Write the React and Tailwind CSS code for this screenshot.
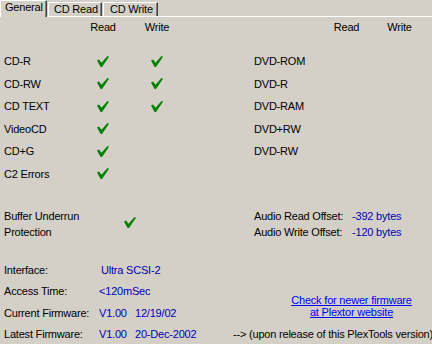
import React from 'react';

const Check = () => (
  <svg width="12" height="11" viewBox="0 0 12 11" className="block">
    <polygon points="0,4.5 2,3.5 4.5,6.8 10.5,0 12,0.8 5,11 3.6,11" fill="#008000" />
  </svg>
);

const cdRows = [
  { label: 'CD-R', read: true, write: true, dvd: 'DVD-ROM' },
  { label: 'CD-RW', read: true, write: true, dvd: 'DVD-R' },
  { label: 'CD TEXT', read: true, write: true, dvd: 'DVD-RAM' },
  { label: 'VideoCD', read: true, write: false, dvd: 'DVD+RW' },
  { label: 'CD+G', read: true, write: false, dvd: 'DVD-RW' },
  { label: 'C2 Errors', read: true, write: false, dvd: '' },
];

const App = () => {
  return (
    <div
      className="w-[432px] h-[344px] overflow-hidden bg-[#d4d0c8] text-black text-[11px] tracking-[-0.2px]"
      style={{ fontFamily: '"Liberation Sans", Arial, sans-serif' }}
    >
      {/* Tabs */}
      <div className="flex h-[16px] items-end">
        <div className="relative z-10 self-start h-[17px] w-[47px] bg-[#d4d0c8] border-l border-t border-white border-r border-r-[#404040] shadow-[inset_-1px_0_0_#808080] pl-[4px] leading-[12px]">
          General
        </div>
        <div className="ml-[1px] h-[14px] w-[54px] border-l border-t border-white border-r border-r-[#404040] shadow-[inset_-1px_0_0_#808080] pl-[5px] leading-[12px]">
          CD Read
        </div>
        <div className="ml-[1px] h-[14px] w-[55px] border-l border-t border-white border-r border-r-[#404040] shadow-[inset_-1px_0_0_#808080] pl-[6px] leading-[12px]">
          CD Write
        </div>
      </div>

      <div className="border-t border-white">
        {/* Column headers */}
        <div className="grid grid-cols-[82px_42px_66px_136px_41px_65px] h-[21px] items-center">
          <div />
          <div className="text-center">Read</div>
          <div className="text-center">Write</div>
          <div />
          <div className="text-center">Read</div>
          <div className="text-center">Write</div>
        </div>

        {/* Media rows */}
        <div className="mt-[12px] grid grid-cols-[82px_42px_66px_136px_41px_65px] auto-rows-[22.5px] items-center">
          {cdRows.map((r) => (
            <React.Fragment key={r.label}>
              <div className="pl-[4px]">{r.label}</div>
              <div className="flex justify-center">{r.read && <Check />}</div>
              <div className="flex justify-center">{r.write && <Check />}</div>
              <div className="pl-[64px]">{r.dvd}</div>
              <div />
              <div />
            </React.Fragment>
          ))}
        </div>

        {/* Buffer underrun / audio offsets */}
        <div className="mt-[24px] flex leading-[15.5px]">
          <div className="flex w-[254px]">
            <div className="w-[124px] pl-[4px]">
              Buffer Underrun
              <br />
              Protection
            </div>
            <div className="pt-[7.5px]">
              <Check />
            </div>
          </div>
          <div className="grid grid-cols-[98px_auto]">
            <div>Audio Read Offset:</div>
            <div className="text-[#0000b0]">-392 bytes</div>
            <div>Audio Write Offset:</div>
            <div className="text-[#0000b0]">-120 bytes</div>
          </div>
        </div>

        {/* Interface / firmware */}
        <div className="mt-[19px] grid grid-cols-[99px_36px_98px_1fr] auto-rows-[21.5px] items-center">
          <div className="pl-[4px]">Interface:</div>
          <div className="col-span-2 pl-[2px] text-[#0000b0]">Ultra SCSI-2</div>
          <div />

          <div className="pl-[4px]">Access Time:</div>
          <div className="col-span-2 text-[#0000b0]">&lt;120mSec</div>
          <div className="row-span-2 self-stretch flex flex-col justify-center pt-[8px] ml-[37px] text-center leading-[12.5px]">
            <a href="#" className="text-[#0000ff] underline">
              Check for newer firmware
              <br />
              at Plextor website
            </a>
          </div>

          <div className="pl-[4px]">Current Firmware:</div>
          <div className="text-[#0000b0]">V1.00</div>
          <div className="text-[#0000b0]">12/19/02</div>

          <div className="pl-[4px]">Latest Firmware:</div>
          <div className="text-[#0000b0]">V1.00</div>
          <div className="text-[#0000b0]">20-Dec-2002</div>
          <div className="whitespace-nowrap">--&gt; (upon release of this PlexTools version)</div>
        </div>
      </div>
    </div>
  );
};

export default App;
